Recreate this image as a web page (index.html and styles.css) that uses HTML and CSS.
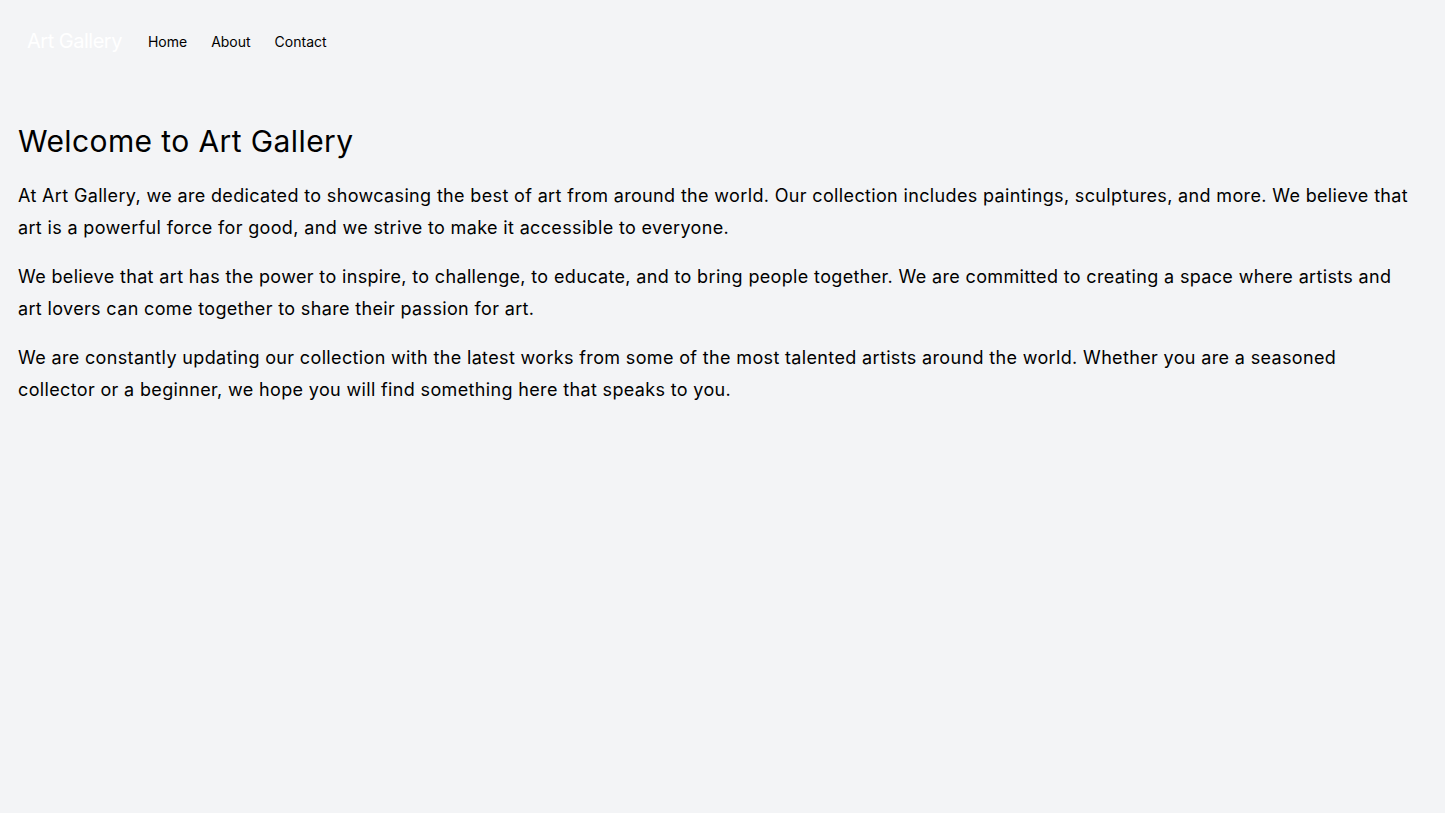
FILE: index.html
```html
<!DOCTYPE html>
<html lang="en">
<head>
<meta charset="utf-8">
<title>Art Gallery</title>
<link rel="stylesheet" href="styles.css">
</head>
<body>
<nav class="nav">
  <a class="brand" href="#">Art Gallery</a>
  <ul class="links">
    <li><a href="#">Home</a></li>
    <li><a href="#">About</a></li>
    <li><a href="#">Contact</a></li>
  </ul>
</nav>
<main class="main">
  <h1 class="title">Welcome to Art Gallery</h1>
  <p class="text">At Art Gallery, we are dedicated to showcasing the best of art from around the world. Our collection includes paintings, sculptures, and more. We believe that art is a powerful force for good, and we strive to make it accessible to everyone.</p>
  <p class="text">We believe that art has the power to inspire, to challenge, to educate, and to bring people together. We are committed to creating a space where artists and art lovers can come together to share their passion for art.</p>
  <p class="text">We are constantly updating our collection with the latest works from some of the most talented artists around the world. Whether you are a seasoned collector or a beginner, we hope you will find something here that speaks to you.</p>
</main>
</body>
</html>
```

FILE: styles.css
```css
* { box-sizing: border-box; }
html, body { margin: 0; padding: 0; }
body {
  background: #f3f4f6;
  color: #000;
  font-family: Inter, "Noto Sans", "Liberation Sans", sans-serif;
  min-height: 813px;
}
.nav {
  display: flex;
  align-items: center;
  padding: 24px 27px;
  height: 82px;
}
.brand {
  color: #fff;
  font-size: 20px;
  letter-spacing: -0.5px;
  text-decoration: none;
  margin-right: 26px;
}
.links {
  display: flex;
  gap: 24px;
  list-style: none;
  margin: 0;
  padding: 0;
}
.links a {
  color: #000;
  font-size: 14px;
  text-decoration: none;
}
.main {
  padding: 41px 31px 40px 18px;
}
.title {
  font-size: 30px;
  font-weight: 400;
  letter-spacing: 0.4px;
  margin: 0 0 21px;
  line-height: 36px;
}
.text {
  font-size: 18px;
  letter-spacing: 0.35px;
  line-height: 32px;
  margin: 0 0 17px;
}
```
